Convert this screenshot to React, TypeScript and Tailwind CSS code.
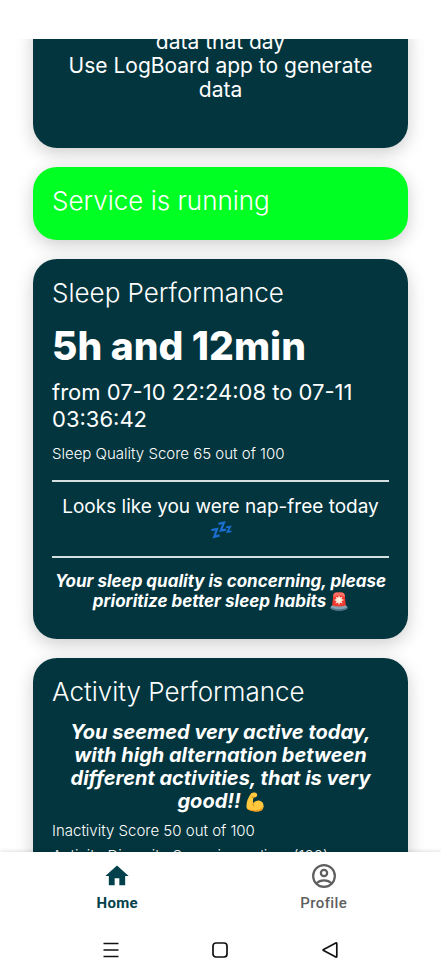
import React from "react";

type ChildrenProps = { children: React.ReactNode };

function Card({ children, className = "bg-[#02353e]" }: ChildrenProps & { className?: string }) {
  return (
    <section
      className={`shrink-0 rounded-[24px] p-[19px] text-white shadow-[0_5px_18px_rgba(0,0,0,0.2)] ${className}`}
    >
      {children}
    </section>
  );
}

function CardTitle({ children }: ChildrenProps) {
  return <h2 className="text-[26px] leading-[30px] font-light whitespace-nowrap">{children}</h2>;
}

function Score({ children }: ChildrenProps) {
  return <p className="text-[15px] leading-5 font-light whitespace-nowrap">{children}</p>;
}

function SleepEmoji() {
  return (
    <svg role="img" aria-label="zzz" viewBox="0 0 22 18" className="inline-block h-[18px] w-[22px] align-[-3px]" fill="none" stroke="#1b6fd0" strokeWidth="2.2">
      <path d="M1.4 9.2 7 8 4.2 15.8 9.600 14.400" />
      <path d="M8.400 2.800 14 1.600 10.800 9.600 16 8.600" />
      <path d="M16 6.400 20.200 5.600 17.400 11 21.400 10.400" strokeWidth="1.700" />
    </svg>
  );
}

function SirenEmoji() {
  return (
    <svg role="img" aria-label="siren" viewBox="0 0 18 19" className="inline-block h-[19px] w-[18px] align-[-4px]">
      <path d="M2 15 3.2 3.4Q3.5.8 6 .6h6q2.500.2 2.800 2.800L16 15Z" fill="#f23b2f" />
      <path d="M3.300 3.400Q3.600.8 6 .6h6q2.500.2 2.800 2.800L15 5Q9 1.500 3.200 5Z" fill="#ff7065" />
      <path d="m9 3 1 2.700 2.600-1.300-1.200 2.600 2.800 1-2.800 1 1.200 2.600L10 10.400 9 13l-1-2.600-2.600 1.200L6.600 9l-2.800-1 2.800-1-1.200-2.600L8 5.700Z" fill="#fff0e0" />
      <path d="M.6 15.200Q.8 13.600 2.400 13.600 9 15.400 15.600 13.600q1.600 0 1.800 1.600v1.400Q15 18.600 9 18.600T.6 16.600Z" fill="#84a3b3" />
      <path d="M.6 15.200Q4 17.200 9 17.200t8.400-2v1.400Q15 18.600 9 18.600T.6 16.600Z" fill="#4f7386" />
    </svg>
  );
}

function MuscleEmoji() {
  return (
    <svg role="img" aria-label="flexed biceps" viewBox="0 0 18 20" className="inline-block h-5 w-[18px] align-[-4px]">
      <path d="M5.200 1.200Q7 .2 9 .6q2 .4 2.200 2 .2 2-1.400 2.600l-2.200.4q-1 3.200-.4 5.600 2.600-3 5.800-2.600 4.600.8 4.600 5.600-.2 5.400-7.200 5.400-5 0-8-1.800-2-1-2-3Q.4 7.400 5.200 1.200Z" fill="#ffc83d" />
      <path d="M1 16.600Q5 18.400 10 18.200q6-.2 7.400-4.600.2 6-7 6-5.200 0-8.200-1.800Q1.200 17.200 1 16.600Z" fill="#f19a1f" />
      <path d="M7.200 11.200q-.6 1.800.6 3M7.600 5.600 5.800 4.800" stroke="#e08a1a" strokeWidth="1" fill="none" strokeLinecap="round" />
    </svg>
  );
}

function HomeIcon() {
  return (
    <svg aria-hidden="true" viewBox="0 0 24 24" className="size-7" fill="#02414b">
      <path d="M10 20v-6h4v6h5v-8h3L12 3 2 12h3v8z" />
    </svg>
  );
}

function ProfileIcon() {
  return (
    <svg aria-hidden="true" viewBox="0 0 24 24" className="size-7" fill="none" stroke="#5f5f5f" strokeWidth="1.900">
      <circle cx="12" cy="12" r="9.300" />
      <circle cx="12" cy="9.400" r="2.700" />
      <path d="M5.500 18.300Q8 15.700 12 15.700t6.500 2.600" />
    </svg>
  );
}

export default function App() {
  return (
    <div className="flex h-screen flex-col overflow-hidden bg-white font-['Inter',sans-serif]">
      <header className="h-[39px] shrink-0 bg-white" />

      <main className="flex min-h-0 flex-1 flex-col gap-[19px] overflow-hidden px-[33px]">
        <Card className="-mt-7 bg-[#02353e]">
          <p className="px-3 pb-[27px] text-center text-[21px] leading-6">
            data that day
            <br />
            Use LogBoard app to generate data
          </p>
        </Card>

        <Card className="bg-[#00ff22]">
          <div className="pb-[5px]">
            <CardTitle>Service is running</CardTitle>
          </div>
        </Card>

        <Card>
          <CardTitle>Sleep Performance</CardTitle>
          <p className="mt-[14px] text-[39px] leading-[48px] font-extrabold whitespace-nowrap">5h and 12min</p>
          <p className="mt-[9px] text-[22px] leading-[27px]">from 07-10 22:24:08 to 07-11 03:36:42</p>
          <div className="mt-[11px]">
            <Score>Sleep Quality Score 65 out of 100</Score>
          </div>
          <hr className="mt-4 border-t-2 border-[#d5dfe0]" />
          <p className="mt-[13px] text-center text-[19px] leading-[23px]">
            Looks like you were nap-free today
            <br />
            <SleepEmoji />
          </p>
          <hr className="mt-[15px] border-t-2 border-[#d5dfe0]" />
          <p className="mt-[13px] pb-[9px] text-center text-[17px] leading-5 font-bold italic">
            Your sleep quality is concerning, please prioritize better sleep habits <SirenEmoji />
          </p>
        </Card>

        <Card>
          <CardTitle>Activity Performance</CardTitle>
          <p className="mt-[14px] px-3 text-center text-[20px] leading-[23px] font-bold italic">
            You seemed very active today, with high alternation between different activities, that is very good!!{" "}
            <MuscleEmoji />
          </p>
          <div className="mt-2 flex flex-col gap-[5px]">
            <Score>Inactivity Score 50 out of 100</Score>
            <Score>Activity Diversity Score is medium (100)</Score>
          </div>
        </Card>
      </main>

      <nav
        aria-label="Main"
        className="relative grid h-[72px] shrink-0 grid-cols-2 bg-white px-[14px] font-['Roboto',sans-serif] text-[15px] leading-5 tracking-wide shadow-[0_-1px_4px_rgba(0,0,0,0.12)]"
      >
        <button type="button" aria-current="page" className="flex flex-col items-center gap-[3px] pt-[10px] font-bold text-[#02414b]">
          <HomeIcon />
          Home
        </button>
        <button type="button" className="flex flex-col items-center gap-[3px] pt-[10px] font-medium text-[#5f5f5f]">
          <ProfileIcon />
          Profile
        </button>
      </nav>

      <footer className="relative grid h-[55px] shrink-0 grid-cols-3 items-center justify-items-center bg-white px-[56px] pb-1">
        <button type="button" aria-label="Recent apps">
          <svg viewBox="0 0 18 18" className="size-[18px]" stroke="#111" strokeWidth="1.700">
            <path d="M1.500 2.500h15M1.500 9h15M1.500 15.500h15" />
          </svg>
        </button>
        <button type="button" aria-label="Home screen">
          <svg viewBox="0 0 18 18" className="size-[18px]" fill="none" stroke="#111" strokeWidth="1.700">
            <rect x="2" y="2" width="14" height="14" rx="3" />
          </svg>
        </button>
        <button type="button" aria-label="Back">
          <svg viewBox="0 0 18 18" className="size-[18px]" fill="none" stroke="#111" strokeWidth="1.700" strokeLinejoin="round">
            <path d="M15.800 2.600v12.800q0 1-1 .5L2.600 9.600q-1-.6 0-1.200l12.200-6.300q1-.5 1 .5Z" />
          </svg>
        </button>
      </footer>
    </div>
  );
}
